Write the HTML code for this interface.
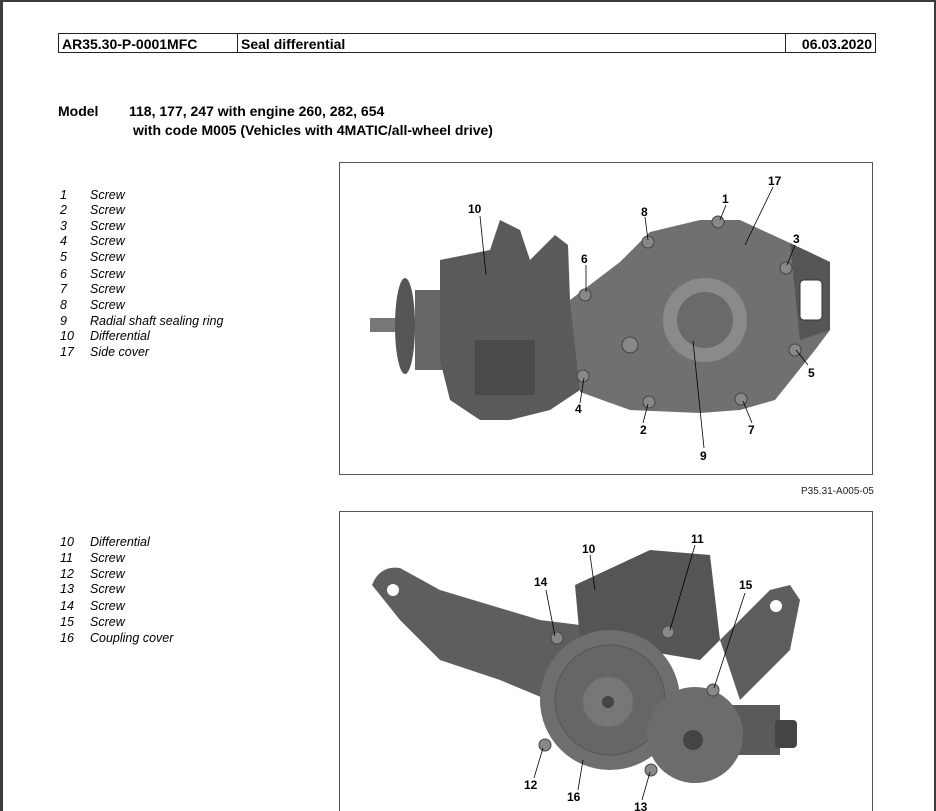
<!DOCTYPE html>
<html><head><meta charset="utf-8"><style>
html,body{margin:0;padding:0;}
body{width:936px;height:811px;background:#3c3c3c;position:relative;overflow:hidden;font-family:"Liberation Sans",Arial,sans-serif;color:#000;}
#page{position:absolute;left:3px;top:2px;width:931px;height:809px;background:#fff;}
.t{position:absolute;white-space:nowrap;}
.hd{position:absolute;top:33px;height:20px;border:1px solid #222;font-weight:bold;font-size:14px;line-height:20px;box-sizing:border-box;}
.li{position:absolute;font-size:12.5px;font-style:italic;white-space:nowrap;line-height:14px;}
.b{font-weight:bold;font-size:12px;font-family:"Liberation Sans",Arial,sans-serif;}
</style></head><body>
<div id="page"></div>
<div class="hd" style="left:58px;width:180px;padding-left:3px;">AR35.30-P-0001MFC</div>
<div class="hd" style="left:237px;width:549px;padding-left:3px;">Seal differential</div>
<div class="hd" style="left:785px;width:91px;text-align:right;padding-right:3px;">06.03.2020</div>
<div class="t" style="left:58px;top:103px;font-weight:bold;font-size:14px;">Model</div>
<div class="t" style="left:129px;top:103px;font-weight:bold;font-size:14px;">118, 177, 247 with engine 260, 282, 654</div>
<div class="t" style="left:133px;top:122px;font-weight:bold;font-size:14px;">with code M005 (Vehicles with 4MATIC/all-wheel drive)</div>

<div class="li" style="left:60px;top:188px">1</div><div class="li" style="left:90px;top:188px">Screw</div>
<div class="li" style="left:60px;top:203px">2</div><div class="li" style="left:90px;top:203px">Screw</div>
<div class="li" style="left:60px;top:219px">3</div><div class="li" style="left:90px;top:219px">Screw</div>
<div class="li" style="left:60px;top:234px">4</div><div class="li" style="left:90px;top:234px">Screw</div>
<div class="li" style="left:60px;top:250px">5</div><div class="li" style="left:90px;top:250px">Screw</div>
<div class="li" style="left:60px;top:267px">6</div><div class="li" style="left:90px;top:267px">Screw</div>
<div class="li" style="left:60px;top:282px">7</div><div class="li" style="left:90px;top:282px">Screw</div>
<div class="li" style="left:60px;top:298px">8</div><div class="li" style="left:90px;top:298px">Screw</div>
<div class="li" style="left:60px;top:314px">9</div><div class="li" style="left:90px;top:314px">Radial shaft sealing ring</div>
<div class="li" style="left:60px;top:329px">10</div><div class="li" style="left:90px;top:329px">Differential</div>
<div class="li" style="left:60px;top:345px">17</div><div class="li" style="left:90px;top:345px">Side cover</div>

<div class="li" style="left:60px;top:535px">10</div><div class="li" style="left:90px;top:535px">Differential</div>
<div class="li" style="left:60px;top:551px">11</div><div class="li" style="left:90px;top:551px">Screw</div>
<div class="li" style="left:60px;top:567px">12</div><div class="li" style="left:90px;top:567px">Screw</div>
<div class="li" style="left:60px;top:582px">13</div><div class="li" style="left:90px;top:582px">Screw</div>
<div class="li" style="left:60px;top:599px">14</div><div class="li" style="left:90px;top:599px">Screw</div>
<div class="li" style="left:60px;top:615px">15</div><div class="li" style="left:90px;top:615px">Screw</div>
<div class="li" style="left:60px;top:631px">16</div><div class="li" style="left:90px;top:631px">Coupling cover</div>

<div class="t" style="left:801px;top:486px;font-size:10px;color:#222;">P35.31-A005-05</div>

<svg width="936" height="811" style="position:absolute;left:0;top:0">
<rect x="339.5" y="162.5" width="533" height="312" fill="#fff" stroke="#555"/>
<rect x="339.5" y="511.5" width="533" height="310" fill="#fff" stroke="#555"/>
<!-- image 1 -->
<rect x="370" y="318" width="50" height="14" fill="#777"/>
<ellipse cx="405" cy="326" rx="10" ry="48" fill="#555"/>
<rect x="415" y="290" width="40" height="80" fill="#666"/>
<path d="M440 260 L490 250 L500 220 L520 230 L530 260 L555 235 L568 245 L570 300 L580 310 L580 390 L550 410 L510 420 L480 420 L450 400 L440 360 Z" fill="#5a5a5a"/>
<rect x="475" y="340" width="60" height="55" fill="#4a4a4a"/>
<path d="M570 300 L620 262 L650 232 L700 220 L740 220 L790 243 L830 262 L830 330 L815 350 L775 400 L740 410 L700 413 L630 410 L580 392 Z" fill="#707070"/>
<path d="M790 243 L830 262 L830 330 L800 340 Z" fill="#555"/>
<rect x="800" y="280" width="22" height="40" rx="4" fill="#fff" stroke="#333"/>
<circle cx="705" cy="320" r="42" fill="#8a8a8a"/>
<circle cx="705" cy="320" r="28" fill="#6a6a6a"/>
<g fill="#888" stroke="#444"><circle cx="718" cy="222" r="6"/><circle cx="648" cy="242" r="6"/><circle cx="786" cy="268" r="6"/><circle cx="585" cy="295" r="6"/><circle cx="795" cy="350" r="6"/><circle cx="583" cy="376" r="6"/><circle cx="649" cy="402" r="6"/><circle cx="741" cy="399" r="6"/><circle cx="630" cy="345" r="8"/></g>
<g stroke="#000" stroke-width="0.8"><line x1="480" y1="216" x2="486" y2="275"/><line x1="645" y1="217" x2="648" y2="240"/><line x1="726" y1="205" x2="720" y2="220"/><line x1="773" y1="187" x2="745" y2="245"/><line x1="795" y1="245" x2="787" y2="265"/><line x1="586" y1="265" x2="586" y2="292"/><line x1="808" y1="365" x2="796" y2="350"/><line x1="580" y1="403" x2="584" y2="378"/><line x1="643" y1="423" x2="648" y2="404"/><line x1="752" y1="423" x2="743" y2="401"/><line x1="704" y1="448" x2="693" y2="341"/></g>
<g class="b"><text x="468" y="213">10</text><text x="641" y="216">8</text><text x="722" y="203">1</text><text x="768" y="185">17</text><text x="793" y="243">3</text><text x="581" y="263">6</text><text x="808" y="377">5</text><text x="575" y="413">4</text><text x="640" y="434">2</text><text x="748" y="434">7</text><text x="700" y="460">9</text></g>
<!-- image 2 -->
<path d="M372 585 Q380 565 400 568 L440 590 L540 620 L580 625 L590 700 L560 705 L500 680 L440 660 L400 620 Z" fill="#5e5e5e"/>
<circle cx="393" cy="590" r="6" fill="#fff"/>
<path d="M720 640 L770 590 L790 585 L800 600 L790 650 L740 700 Z" fill="#5e5e5e"/>
<circle cx="776" cy="606" r="6" fill="#fff"/>
<path d="M575 585 L650 550 L710 555 L720 640 L700 660 L580 640 Z" fill="#555"/>
<circle cx="610" cy="700" r="70" fill="#6e6e6e"/>
<circle cx="610" cy="700" r="55" fill="#666" stroke="#555"/>
<circle cx="608" cy="702" r="25" fill="#777"/>
<circle cx="608" cy="702" r="6" fill="#444"/>
<rect x="730" y="705" width="50" height="50" fill="#5a5a5a"/>
<rect x="775" y="720" width="22" height="28" rx="4" fill="#444"/>
<circle cx="695" cy="735" r="48" fill="#6c6c6c"/>
<circle cx="693" cy="740" r="10" fill="#444"/>
<g fill="#888" stroke="#444"><circle cx="557" cy="638" r="6"/><circle cx="668" cy="632" r="6"/><circle cx="713" cy="690" r="6"/><circle cx="545" cy="745" r="6"/><circle cx="651" cy="770" r="6"/></g>
<g stroke="#000" stroke-width="0.8"><line x1="590" y1="555" x2="595" y2="590"/><line x1="695" y1="545" x2="670" y2="630"/><line x1="546" y1="590" x2="555" y2="636"/><line x1="745" y1="593" x2="714" y2="688"/><line x1="534" y1="778" x2="543" y2="748"/><line x1="578" y1="790" x2="583" y2="760"/><line x1="642" y1="800" x2="650" y2="772"/></g>
<g class="b"><text x="582" y="553">10</text><text x="691" y="543">11</text><text x="534" y="586">14</text><text x="739" y="589">15</text><text x="524" y="789">12</text><text x="567" y="801">16</text><text x="634" y="811">13</text></g>
</svg>
</body></html>
